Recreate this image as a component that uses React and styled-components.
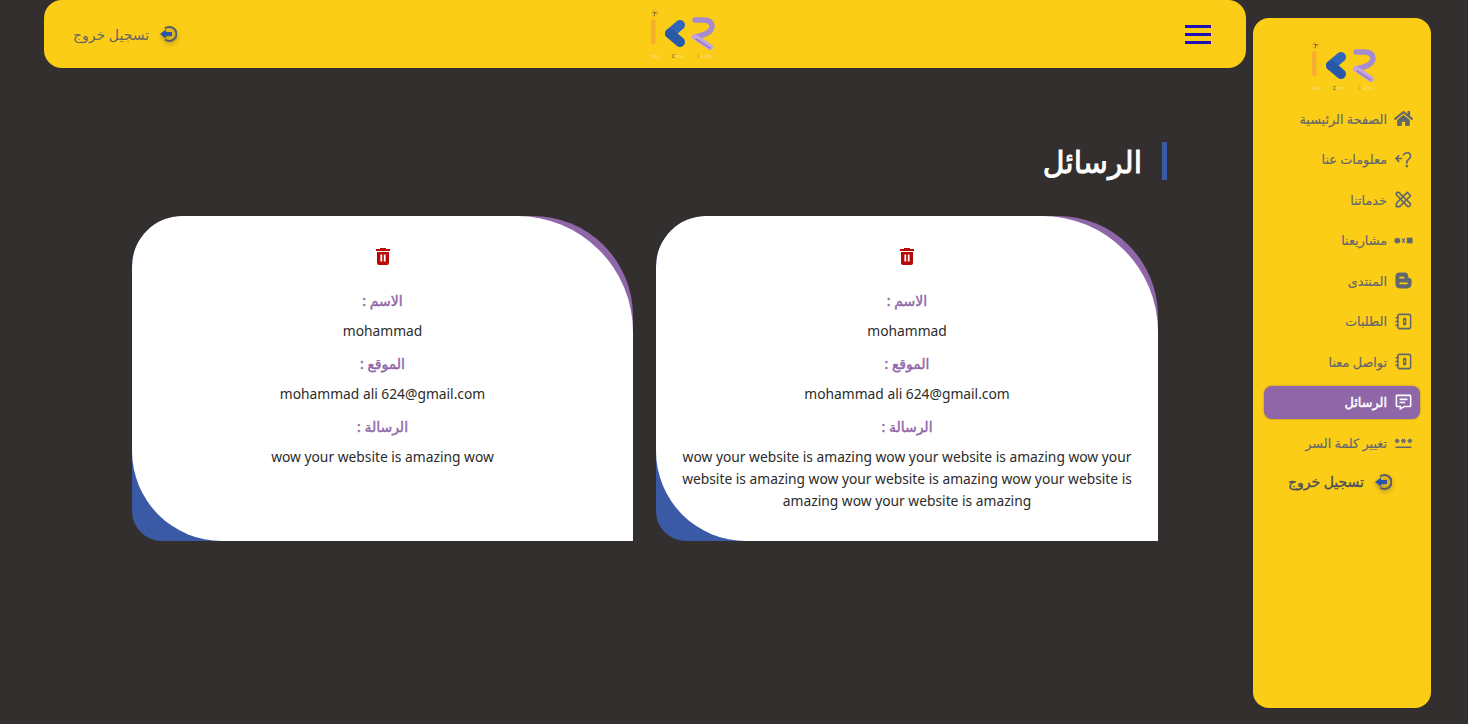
import React from 'react'
import styled, { createGlobalStyle } from 'styled-components'
import { FaHome } from 'react-icons/fa'
import { MdPassword } from 'react-icons/md'
import { BiMessageDetail } from 'react-icons/bi'

const GlobalStyle = createGlobalStyle`
html, body {
  margin: 0;
  padding: 0;
  background: #332f2e;
  font-family: "Noto Sans", "DejaVu Sans", sans-serif;
}
* { box-sizing: border-box; }
`

const Page = styled.div`
  direction: rtl;
  display: flex;
  align-items: flex-start;
  gap: 7px;
  height: 724px;
  padding: 0 37px 0 44px;
  overflow: hidden;
`

const Sidebar = styled.aside`
  width: 178px;
  height: 690px;
  flex-shrink: 0;
  margin-top: 18px;
  padding: 22px 11px 0;
  background: #fccd16;
  border-radius: 16px;
  display: flex;
  flex-direction: column;
  align-items: stretch;
`

const SideLogo = styled.div`
  display: flex;
  justify-content: center;
  height: 60px;
  margin-bottom: 2px;
  padding-left: 4px;
`

const NavItem = styled.a`
  display: flex;
  align-items: center;
  gap: 7px;
  height: 33px;
  margin-bottom: 7.5px;
  padding-right: 7px;
  border-radius: 8px;
  font-size: 12.8px;
  -webkit-text-stroke: ${p => (p.$active ? '0.45px #fff' : '0.15px #62666e')};
  color: ${p => (p.$active ? '#fff' : '#62666e')};
  background: ${p => (p.$active ? '#8f66a8' : 'transparent')};
  box-shadow: ${p => (p.$active ? '0 0 2px rgba(90,60,110,.6)' : 'none')};
  svg { width: 19px; height: 19px; flex-shrink: 0; }
`

const SideLogout = styled.div`
  display: flex;
  align-items: center;
  gap: 10px;
  height: 24px;
  margin-top: 3px;
  padding-right: 28px;
  font-size: 14px;
  -webkit-text-stroke: 0.35px #4b4f5c;
  color: #4b4f5c;
`

const Main = styled.div`
  flex: 1;
  min-width: 0;
`

const Header = styled.header`
  height: 68px;
  padding: 0 35px 0 29px;
  background: #fccd16;
  border-radius: 18px;
  display: flex;
  align-items: center;
  justify-content: space-between;
`

const Burger = styled.button`
  width: 26px;
  padding: 0;
  border: 0;
  background: none;
  display: flex;
  flex-direction: column;
  gap: 5px;
  span {
    display: block;
    height: 3px;
    background: #1c10b4;
  }
`

const HeaderLogo = styled.div`
  height: 60px;
  margin-right: -3px;
  margin-top: 8px;
`

const HeaderLogout = styled.div`
  display: flex;
  align-items: center;
  gap: 10px;
  font-size: 14px;
  color: #6a6660;
`

const Content = styled.main`
  padding: 74px 79px 0 88px;
`

const Title = styled.h1`
  margin: 0 0 36px;
  height: 38px;
  padding-right: 20px;
  border-right: 5px solid #3a5aa6;
  display: flex;
  align-items: center;
  font-size: 30px;
  font-weight: 400;
  -webkit-text-stroke: 0.9px #fff;
  color: #fff;
`

const Cards = styled.div`
  margin-right: 9px;
  display: grid;
  grid-template-columns: 502px 501px;
  gap: 23px;
`

const Card = styled.section`
  height: 325px;
  overflow: hidden;
  border-radius: 50px 100px 0 30px;
  background: linear-gradient(to top right, #3a5aa6 50%, #8f66a8 50%);
`

const CardBody = styled.div`
  height: 100%;
  padding: 31px 22px 0;
  background: #fff;
  border-radius: 50px 116px 0 90px;
  display: flex;
  flex-direction: column;
  align-items: center;
  text-align: center;
`

const DeleteBtn = styled.button`
  padding: 0;
  border: 0;
  background: none;
  height: 18px;
  margin-bottom: 25px;
  svg { display: block; width: 16px; height: 18px; }
`

const Label = styled.div`
  font-size: 14px;
  line-height: 22px;
  -webkit-text-stroke: 0.4px #8f66a8;
  color: #8f66a8;
  margin-bottom: 8px;
`

const Value = styled.div`
  font-size: 13.8px;
  line-height: 22px;
  color: #2b2b2b;
  margin-bottom: 11px;
`

const ExitIcon = styled.svg`
  width: 18px;
  height: 18px;
  flex-shrink: 0;
  filter: drop-shadow(0 2px 2px rgba(60, 60, 60, .45));
`

function Logo() {
  return (
    <svg width="68" height="56" viewBox="0 0 68 56">
      <circle cx="6" cy="5" r="3.4" fill="none" stroke="#f0b030" strokeWidth=".8" />
      <path d="M3.5 4 L8 5 M6 4.5 L5 8" fill="none" stroke="#5a4a20" strokeWidth=".8" />
      <rect x="2" y="11" width="4.6" height="25" rx="2.3" fill="#f6ad30" />
      <path d="M31 17 L21 25.5" fill="none" stroke="#2f66ba" strokeWidth="10" strokeLinecap="round" />
      <path d="M21 25.5 L31 34" fill="none" stroke="#2a58a8" strokeWidth="10" strokeLinecap="round" />
      <path d="M46 12 H54 Q63 12 63 19 Q62 26 46 29" fill="none" stroke="#a58bd0" strokeWidth="5.4" strokeLinecap="round" />
      <path d="M46 29 L61 39" fill="none" stroke="#c3a6dc" strokeWidth="6" strokeLinecap="round" />
      <path d="M47 31 L61 40" fill="none" stroke="#9a7cc4" strokeWidth="1.6" strokeLinecap="round" />
      <text x="2" y="50" fontSize="5" fill="#f7dd7a" fontFamily="Noto Sans, sans-serif" direction="ltr">dea</text>
      <text x="23" y="50" fontSize="5" fill="#f7dd7a" fontFamily="Noto Sans, sans-serif" direction="ltr"><tspan fill="#27406e">C</tspan>ore</text>
      <text x="48" y="50" fontSize="5" fill="#f7dd7a" fontFamily="Noto Sans, sans-serif" direction="ltr"><tspan fill="#e8a030">R</tspan>eality</text>
    </svg>
  )
}

function ExitGlyph() {
  return (
    <ExitIcon viewBox="0 0 18 18">
      <path d="M6 3.6 A7 7 0 1 1 6 14.4" fill="none" stroke="#585c66" strokeWidth="2" />
      <path d="M1 9 L7 4.5 V7 H13 V11 H7 V13.5 Z" fill="#2c54a8" />
    </ExitIcon>
  )
}

function AboutGlyph() {
  return (
    <svg viewBox="0 0 20 20" fill="none" stroke="#62666e" strokeWidth="1.7" strokeLinecap="round">
      <path d="M10 5 Q12 2.5 15 3 Q18.5 4.5 17 8 Q15 10.5 13.5 12 V14" />
      <circle cx="13.5" cy="17" r=".5" />
      <path d="M2 9 H8 M2 9 L5 6 M2 9 L5 12" />
    </svg>
  )
}

function ToolsGlyph() {
  return (
    <svg viewBox="0 0 20 20" fill="none" stroke="#62666e" strokeWidth="1.7" strokeLinejoin="round">
      <path d="M2.5 5 Q2 3 3.5 2.5 Q5 2 6 3.5 L17 14 Q18 15.5 16.5 17 Q15 18 14 17 L3.5 6 Z" />
      <path d="M14 2.5 L17.5 6 L6 17.5 L2.5 17.5 V14 Z" />
    </svg>
  )
}

function ProjectsGlyph() {
  return (
    <svg viewBox="0 0 20 20" fill="#62666e">
      <circle cx="3.5" cy="10" r="3" />
      <path d="M8 8 L9 7.5 L10 9 L11 7.5 L12 8 L10.8 10 L12 12 L11 12.5 L10 11 L9 12.5 L8 12 L9.2 10 Z" />
      <rect x="13.5" y="7" width="6" height="6" />
    </svg>
  )
}

function BlogGlyph() {
  return (
    <svg viewBox="0 0 20 20">
      <path d="M6 1.5 H11 Q15 1.5 15 6 Q15 7.5 16.5 7.5 Q18.5 7.5 18.5 9.5 V13 Q18.5 18.5 13 18.5 H7 Q1.5 18.5 1.5 13 V6 Q1.5 1.5 6 1.5 Z" fill="#62666e" />
      <path d="M6.5 7 H10 M6.5 13 H13.5" stroke="#fccd16" strokeWidth="2" strokeLinecap="round" />
    </svg>
  )
}

function NotebookGlyph() {
  return (
    <svg viewBox="0 0 20 20" fill="none" stroke="#62666e" strokeWidth="1.6">
      <rect x="4" y="2.5" width="13.5" height="15" rx="2" />
      <path d="M1.5 6 H5 M1.5 10 H5 M1.5 14 H5" />
      <rect x="9.5" y="6" width="3.4" height="8" fill="#62666e" stroke="none" rx="1" />
      <rect x="10.6" y="9" width="1.2" height="2" fill="#fccd16" stroke="none" />
    </svg>
  )
}

function TrashGlyph() {
  return (
    <svg viewBox="0 0 16 18">
      <path d="M5 2 V1 H11 V2 H15 V4 H1 V2 Z" fill="#b80808" />
      <path d="M2 5 H14 V16 Q14 18 12 18 H4 Q2 18 2 16 Z" fill="#b80808" />
      <rect x="5.4" y="7.5" width="1.8" height="7" fill="#fff" />
      <rect x="8.8" y="7.5" width="1.8" height="7" fill="#fff" />
    </svg>
  )
}

const navItems = [
  { label: 'الصفحة الرئيسية', icon: <FaHome color="#62666e" /> },
  { label: 'معلومات عنا', icon: <AboutGlyph /> },
  { label: 'خدماتنا', icon: <ToolsGlyph /> },
  { label: 'مشاريعنا', icon: <ProjectsGlyph /> },
  { label: 'المنتدى', icon: <BlogGlyph /> },
  { label: 'الطلبات', icon: <NotebookGlyph /> },
  { label: 'تواصل معنا', icon: <NotebookGlyph /> },
  { label: 'الرسائل', icon: <BiMessageDetail color="#fff" />, active: true },
  { label: 'تغيير كلمة السر', icon: <MdPassword color="#62666e" /> },
]

const phrase = 'wow your website is amazing'

const messages = [
  { id: 1, name: 'mohammad', site: 'mohammad ali 624@gmail.com', text: Array(6).fill(phrase).join(' ') },
  { id: 2, name: 'mohammad', site: 'mohammad ali 624@gmail.com', text: phrase + ' wow' },
]

function App() {
  return (
    <Page>
      <GlobalStyle />
      <Sidebar>
        <SideLogo><Logo /></SideLogo>
        {navItems.map(item => (
          <NavItem key={item.label} $active={item.active}>
            {item.icon}
            {item.label}
          </NavItem>
        ))}
        <SideLogout>
          <ExitGlyph />
          تسجيل خروج
        </SideLogout>
      </Sidebar>
      <Main>
        <Header>
          <Burger><span /><span /><span /></Burger>
          <HeaderLogo><Logo /></HeaderLogo>
          <HeaderLogout>
            <ExitGlyph />
            تسجيل خروج
          </HeaderLogout>
        </Header>
        <Content>
          <Title>الرسائل</Title>
          <Cards>
            {messages.map(m => (
              <Card key={m.id}>
                <CardBody>
                  <DeleteBtn><TrashGlyph /></DeleteBtn>
                  <Label>الاسم :</Label>
                  <Value>{m.name}</Value>
                  <Label>الموقع :</Label>
                  <Value>{m.site}</Value>
                  <Label>الرسالة :</Label>
                  <Value>{m.text}</Value>
                </CardBody>
              </Card>
            ))}
          </Cards>
        </Content>
      </Main>
    </Page>
  )
}

export default App
